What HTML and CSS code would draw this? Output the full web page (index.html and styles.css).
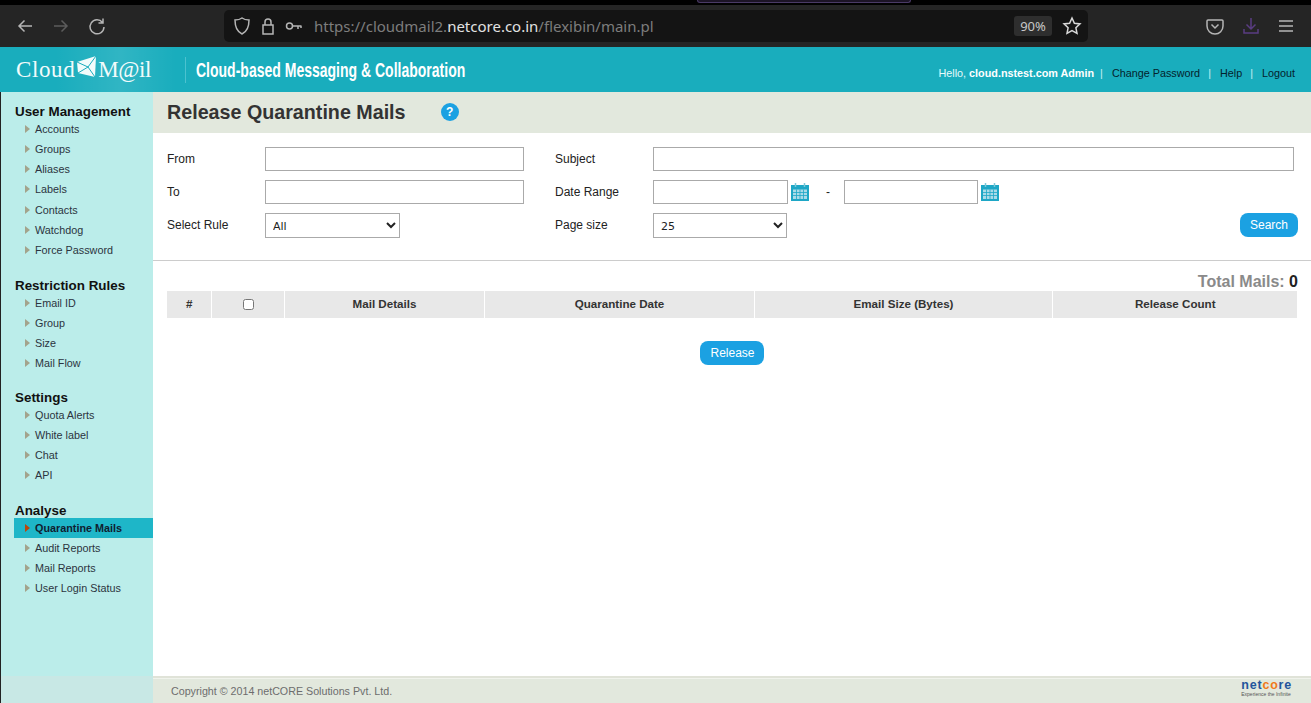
FILE: index.html
```html
<!DOCTYPE html>
<html lang="en">
<head>
    <meta charset="UTF-8">
    <title>Release Quarantine Mails - Cloud Mail</title>
    <link rel="stylesheet" href="styles.css">
</head>
<body>
    <!-- Browser toolbar -->
    <div class="browser-top"><span class="browser-tab"></span></div>
    <div class="browser-bar">
        <div class="nav-buttons">
            <svg width="20" height="20" viewBox="0 0 20 20" class="nav-icon"><path d="M17 10H4M9.500 4.500L4 10l5.500 5.500"/></svg>
            <svg width="20" height="20" viewBox="0 0 20 20" class="nav-icon dim"><path d="M3 10h13M10.500 4.500L16 10l-5.500 5.500"/></svg>
            <svg width="20" height="20" viewBox="0 0 20 20" class="nav-icon"><path d="M15.500 6.500A7 7 0 1 0 17 11M16 2.500v4.500h-4.500"/></svg>
        </div>
        <div class="url-bar">
            <svg width="18" height="20" viewBox="0 0 18 20" class="nav-icon"><path d="M9 2c2 1.500 4 2 7 2 0 7-1.500 11.500-7 14C3.500 15.500 2 11 2 4c3 0 5-.5 7-2z"/></svg>
            <svg width="16" height="20" viewBox="0 0 16 20" class="nav-icon"><path d="M3 9h10v9H3zM5 9V6a3 3 0 0 1 6 0v3"/></svg>
            <svg width="18" height="12" viewBox="0 0 18 12" class="nav-icon"><circle cx="4.500" cy="6" r="3"/><path d="M7.500 6h9M13 6v3M16 6v2"/></svg>
            <span class="url-text">https://cloudmail2.<b>netcore.co.in</b>/flexibin/main.pl</span>
            <span class="zoom-level">90%</span>
            <svg width="20" height="20" viewBox="0 0 20 20" class="nav-icon light"><path d="M10 2l2.400 5.200 5.600.7-4.100 3.900 1.100 5.600-5-2.800-5 2.800 1.100-5.600L2 7.900l5.600-.7z"/></svg>
        </div>
        <div class="tool-buttons">
            <svg width="18" height="18" viewBox="0 0 18 18" class="nav-icon"><path d="M2 3h14a1 1 0 0 1 1 1v5a8 8 0 0 1-16 0V4a1 1 0 0 1 1-1zM5.500 7.500L9 11l3.500-3.500"/></svg>
            <svg width="18" height="18" viewBox="0 0 18 18" class="nav-icon purple"><path d="M9 1v11M4.500 7.500L9 12l4.500-4.500M2 12v4h14v-4"/></svg>
            <svg width="16" height="16" viewBox="0 0 16 16" class="nav-icon"><path d="M1 3h14M1 8h14M1 13h14"/></svg>
        </div>
    </div>

    <header class="site-header">
        <div class="logo">
            <span>Cloud</span>
            <svg width="22" height="22" viewBox="0 0 22 22" class="logo-mark"><path d="M2 6L21 0 20 21 3 17z" fill="#f2fbfb"/><path d="M2 6l11 5 8-11M3 17l10-6 7 10" fill="none" stroke="#19adbd"/></svg>
            <span class="logo-end">M@il</span>
        </div>
        <div class="tagline"><span>Cloud-based Messaging &amp; Collaboration</span></div>
        <div class="user-links">
            Hello, <b>cloud.nstest.com Admin</b>
            <i>|</i><a href="#">Change Password</a>
            <i>|</i><a href="#">Help</a>
            <i>|</i><a href="#">Logout</a>
        </div>
    </header>

    <div class="layout">
        <nav class="sidebar">
            <h3>User Management</h3>
            <ul class="menu-users">
                <li>Accounts</li>
                <li>Groups</li>
                <li>Aliases</li>
                <li>Labels</li>
                <li>Contacts</li>
                <li>Watchdog</li>
                <li>Force Password</li>
            </ul>
            <h3>Restriction Rules</h3>
            <ul>
                <li>Email ID</li>
                <li>Group</li>
                <li>Size</li>
                <li>Mail Flow</li>
            </ul>
            <h3>Settings</h3>
            <ul class="menu-settings">
                <li>Quota Alerts</li>
                <li>White label</li>
                <li>Chat</li>
                <li>API</li>
            </ul>
            <h3>Analyse</h3>
            <ul>
                <li class="active">Quarantine Mails</li>
                <li>Audit Reports</li>
                <li>Mail Reports</li>
                <li>User Login Status</li>
            </ul>
        </nav>

        <main class="content">
            <div class="page-title">
                <h1>Release Quarantine Mails</h1>
                <span class="help-badge">?</span>
            </div>

            <form class="filters">
                <div class="filter-row">
                    <label class="label-left">From</label>
                    <input type="text" class="field-left">
                    <label class="label-right">Subject</label>
                    <input type="text" class="field-subject">
                </div>
                <div class="filter-row">
                    <label class="label-left">To</label>
                    <input type="text" class="field-left">
                    <label class="label-right">Date Range</label>
                    <input type="text" class="field-date">
                    <svg width="20" height="20" viewBox="0 0 20 20" class="calendar"><use href="#cal"/></svg>
                    <span class="date-dash">-</span>
                    <input type="text" class="field-date field-date-to">
                    <svg width="20" height="20" viewBox="0 0 20 20" class="calendar"><use href="#cal"/></svg>
                </div>
                <div class="filter-row">
                    <label class="label-left">Select Rule</label>
                    <select class="field-rule"><option>All</option></select>
                    <label class="label-right">Page size</label>
                    <select class="field-size"><option>25</option></select>
                    <button type="button" class="btn btn-search">Search</button>
                </div>
            </form>

            <div class="total">Total Mails: <b>0</b></div>

            <table class="mails">
                <thead>
                    <tr>
                        <th class="col-num">#</th>
                        <th class="col-check"><input type="checkbox"></th>
                        <th class="col-details">Mail Details</th>
                        <th class="col-date">Quarantine Date</th>
                        <th class="col-size">Email Size (Bytes)</th>
                        <th>Release Count</th>
                    </tr>
                </thead>
            </table>

            <div class="release-row"><button type="button" class="btn">Release</button></div>

            <footer class="site-footer">
                <span>Copyright © 2014 netCORE Solutions Pvt. Ltd.</span>
                <div class="netcore">
                    <div class="netcore-name">net<em>co</em>re</div>
                    <div class="netcore-sub">Experience the Infinite</div>
                </div>
            </footer>
        </main>
    </div>

    <svg width="0" height="0" class="defs">
        <symbol id="cal" viewBox="0 0 20 20">
            <path d="M1 3h18v16H1z" fill="#1ea7c6"/>
            <path d="M3 7.500h14v9.500H3z" fill="#a9dbe8"/>
            <path d="M3 10.500h14M3 13.500h14M6.500 7.500V17M10 7.500V17M13.500 7.500V17" stroke="#1ea7c6" stroke-width=".8"/>
            <path d="M5.500 1v4M14.500 1v4" stroke="#7cc7d8" stroke-width="1.500"/>
        </symbol>
    </svg>
</body>
</html>
```

FILE: styles.css
```css
* {
    box-sizing: border-box;
    margin: 0;
    padding: 0;
}

html, body {
    height: 100%;
    overflow: hidden;
}

body {
    font-family: 'Liberation Sans', Arial, sans-serif;
    font-size: 10.8px;
    background-color: #fff;
    color: #222;
    display: flex;
    flex-direction: column;
}

.defs {
    position: absolute;
}

/* browser chrome */
.browser-top {
    height: 5px;
    background-color: #000;
    position: relative;
}

.browser-tab {
    position: absolute;
    left: 697px;
    top: 0;
    width: 214px;
    height: 3px;
    background-color: #1c1426;
    border: 1px solid #4a3a66;
    border-top: none;
    border-radius: 0 0 4px 4px;
}

.browser-bar {
    height: 42px;
    background-color: #252525;
    display: flex;
    align-items: center;
    padding-left: 15px;
}

.nav-buttons {
    display: flex;
    gap: 16px;
    width: 209px;
}

.nav-icon {
    fill: none;
    stroke: #b5b5b5;
    stroke-width: 1.5;
    flex: none;
}

.nav-icon.dim {
    stroke: #5c5c5c;
}

.nav-icon.light {
    stroke: #d8d8d8;
}

.nav-icon.purple {
    stroke: #5a3d82;
}

.url-bar {
    width: 864px;
    height: 32px;
    background-color: #141414;
    border-radius: 5px;
    display: flex;
    align-items: center;
    padding: 0 6px 0 9px;
    gap: 9px;
}

.url-text {
    font-family: 'Noto Sans', sans-serif;
    font-size: 15px;
    color: #7d7d7d;
    flex: 1;
    margin-left: 2px;
    white-space: nowrap;
}

.url-text b {
    font-weight: normal;
    color: #e2e2e2;
}

.zoom-level {
    font-family: 'Noto Sans', sans-serif;
    font-size: 13px;
    color: #c8c8c8;
    background-color: #2e2e2e;
    border-radius: 3px;
    width: 38px;
    height: 20px;
    line-height: 20px;
    text-align: center;
    margin-right: 1px;
}

.tool-buttons {
    display: flex;
    align-items: center;
    gap: 18px;
    margin-left: 118px;
}

/* site header */
.site-header {
    height: 45px;
    flex: none;
    background-color: #19adbd;
    display: flex;
    align-items: center;
    color: #fff;
}

.logo {
    font-family: 'Liberation Serif', serif;
    font-size: 23px;
    letter-spacing: 0.6px;
    color: #f2fbfb;
    display: flex;
    align-items: center;
    align-self: stretch;
    width: 185px;
    padding-left: 16px;
    background: linear-gradient(90deg, transparent 30%, rgba(255, 255, 255, 0.1) 65%, transparent 95%);
}

.logo-mark {
    margin: -5px 1px 0 0;
}

.logo-end {
    letter-spacing: -0.4px;
}

.tagline {
    font-family: 'Liberation Sans', sans-serif;
    font-size: 21px;
    font-weight: bold;
    border-left: 1px solid #4cc2cf;
    height: 26px;
    line-height: 26px;
    padding-left: 10px;
    white-space: nowrap;
}

.tagline span {
    display: inline-block;
    transform: scaleX(0.667);
    transform-origin: left center;
}

.user-links {
    margin-left: auto;
    padding: 6px 14px 0 0;
    white-space: nowrap;
    color: #e8fafb;
}

.user-links b {
    color: #fff;
}

.user-links i {
    font-style: normal;
    color: #c6eef2;
    margin: 0 9px 0 3px;
}

.user-links a {
    color: #04222c;
    text-decoration: none;
    margin-right: 2px;
}

/* layout */
.layout {
    flex: 1;
    display: flex;
    min-height: 0;
}

.sidebar {
    width: 153px;
    flex: none;
    background: linear-gradient(#bbedea 584px, #c8e8e5 584px);
    border-left: 1px solid #222;
    padding: 12px 0 0 13px;
}

.sidebar h3 {
    font-size: 13.4px;
    line-height: 16px;
    padding-left: 1px;
    color: #111;
}

.sidebar ul {
    list-style: none;
    margin-bottom: 16.5px;
    margin-top: -1px;
}

.sidebar ul.menu-users {
    margin-bottom: 18px;
}

.sidebar ul.menu-settings {
    margin-bottom: 16.9px;
}

.sidebar li {
    height: 20.15px;
    line-height: 20px;
    padding-left: 21px;
    color: #2b3440;
    position: relative;
}

.sidebar li::before {
    content: "";
    position: absolute;
    left: 11px;
    top: 6px;
    border-left: 5px solid #a3a38c;
    border-top: 4px solid transparent;
    border-bottom: 4px solid transparent;
}

.sidebar li.active {
    background-color: #1eb6c8;
    font-weight: bold;
    color: #102030;
}

.sidebar li.active::before {
    border-left-color: #b8460c;
}

/* main content */
.content {
    flex: 1;
    display: flex;
    flex-direction: column;
    min-width: 0;
}

.page-title {
    height: 41px;
    flex: none;
    background-color: #e2e8dd;
    display: flex;
    align-items: center;
    padding-left: 14px;
}

.page-title h1 {
    font-size: 19.7px;
    color: #333;
}

.help-badge {
    width: 18px;
    height: 18px;
    border-radius: 50%;
    background-color: #1ba1e2;
    color: #fff;
    font-size: 12px;
    font-weight: bold;
    line-height: 18px;
    text-align: center;
    margin: -2px 0 0 35px;
}

.filters {
    height: 128px;
    flex: none;
    padding: 14px 13px 0 14px;
    border-bottom: 1px solid #ccc;
}

.filter-row {
    display: flex;
    align-items: center;
    height: 24px;
    margin-bottom: 9px;
    font-size: 12px;
}

.filter-row label {
    color: #222;
}

.label-left {
    width: 98px;
}

.label-right {
    width: 98px;
    margin-left: 31px;
}

.filter-row input[type="text"],
.filter-row select {
    height: 24px;
    border: 1px solid #aaa;
    background-color: #fff;
    border-radius: 0;
    font-family: 'Liberation Sans', Arial, sans-serif;
    font-size: 12px;
    padding-left: 7px;
}

.filter-row select {
    height: 25px;
    margin-top: 1px;
    padding: 1px 0 0 3px;
    font-family: 'DejaVu Sans', sans-serif;
    font-size: 11px;
    color: #222;
}

.field-left {
    width: 259px;
}

.field-subject {
    width: 641px;
}

.field-date {
    width: 135px;
}

.filter-row .field-date-to {
    width: 134px;
}

.field-rule {
    width: 135px;
    margin-right: 124px;
}

.field-size {
    width: 134px;
}

.calendar {
    margin-left: 2px;
    flex: none;
}

.date-dash {
    width: 34px;
    padding-left: 2px;
    text-align: center;
}

.btn {
    font-family: 'Liberation Sans', Arial, sans-serif;
    font-size: 12px;
    height: 24px;
    width: 64px;
    border: none;
    border-radius: 8px;
    background-color: #1ba1e2;
    color: #fff;
}

.btn-search {
    width: 58px;
    margin-left: auto;
}

.total {
    margin: 11px 13px 0 14px;
    height: 19px;
    line-height: 19px;
    text-align: right;
    font-size: 16px;
    font-weight: bold;
    color: #8a8a8a;
}

.total b {
    color: #222;
}

.mails {
    margin-left: 14px;
    width: 1130px;
    flex: none;
    table-layout: fixed;
    border-collapse: collapse;
}

.mails th {
    height: 27px;
    padding: 0 0 2px 1px;
    background-color: #e8e8e8;
    border-left: 1px solid #fff;
    font-size: 11.6px;
    color: #333;
    vertical-align: middle;
}

.mails th:first-child {
    border-left: none;
}

.mails .col-check {
    padding-left: 2px;
}

.mails input {
    width: 11px;
    height: 11px;
    vertical-align: middle;
}

.col-num { width: 44px; }
.col-check { width: 73px; }
.col-details { width: 200px; }
.col-date { width: 270px; }
.col-size { width: 298px; }

.release-row {
    flex: 1;
    padding-top: 23px;
    text-align: center;
    padding-right: 1px;
}

.release-row .btn {
    padding-left: 2px;
}

.site-footer {
    height: 27px;
    flex: none;
    background-color: #e2e8dd;
    border-top: 2px solid #e0e3d8;
    box-shadow: inset 0 1px 0 #f0f3ec;
    display: flex;
    align-items: center;
    justify-content: space-between;
    padding: 1px 19px 0 18px;
    color: #6d6d6d;
    font-size: 10.7px;
}

.netcore {
    text-align: left;
    margin-top: -6px;
}

.netcore-name {
    font-size: 12.5px;
    font-weight: bold;
    letter-spacing: 0.8px;
    line-height: 12px;
    color: #23559c;
}

.netcore-name em {
    font-style: normal;
    color: #f07a1a;
}

.netcore-sub {
    font-size: 5px;
    line-height: 6px;
    color: #555;
}
```
